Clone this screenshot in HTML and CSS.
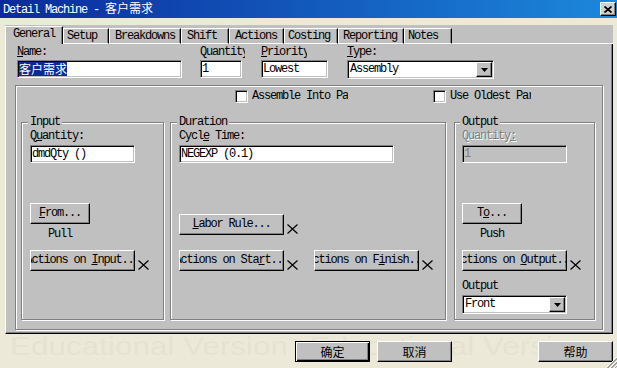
FILE: index.html
```html
<!DOCTYPE html>
<html lang="zh-CN">
<head>
    <meta charset="UTF-8">
    <meta name="viewport" content="width=device-width, initial-scale=1.0">
    <title>Detail Machine - 客户需求</title>
    <link rel="stylesheet" href="styles.css">
</head>
<body>
    <div class="titlebar">
        <span class="title">Detail Machine - <span class="cjk">客户需求</span></span>
        <span class="close-btn">
            <svg width="8" height="7" viewBox="0 0 8 7"><path d="M0.5 0.5 L7.5 6.5 M7.5 0.5 L0.5 6.5" stroke="#000" stroke-width="1.8" fill="none"/></svg>
        </span>
    </div>

    <div class="tabs">
        <div class="tabstrip">
            <div class="tab tab-active tab-general">General</div>
            <div class="tab tab-setup">Setup</div>
            <div class="tab tab-breakdowns">Breakdowns</div>
            <div class="tab tab-shift">Shift</div>
            <div class="tab tab-actions">Actions</div>
            <div class="tab tab-costing">Costing</div>
            <div class="tab tab-reporting">Reporting</div>
            <div class="tab tab-notes">Notes</div>
            <div class="tab-fill"></div>
        </div>

        <div class="page">
            <div class="fields">
                <div class="field field-name">
                    <div class="field-label"><u>N</u>ame:</div>
                    <div class="edit"><span class="cjk selected">客户需求</span></div>
                </div>
                <div class="field field-qty">
                    <div class="field-label label-qty">Quantity</div>
                    <div class="edit">1</div>
                </div>
                <div class="field field-priority">
                    <div class="field-label label-priority"><u>P</u>riority</div>
                    <div class="edit">Lowest</div>
                </div>
                <div class="field field-type">
                    <div class="field-label"><u>T</u>ype:</div>
                    <div class="combo">
                        <span class="combo-text">Assembly</span>
                        <span class="combo-arrow"><svg width="7" height="4" viewBox="0 0 7 4"><path d="M0 0 H7 L3.5 4 Z" fill="#000"/></svg></span>
                    </div>
                </div>
            </div>

            <div class="frame">
                <div class="checks">
                    <div class="check">
                        <span class="check-box"></span>
                        <span class="check-text check-assemble">Assemble Into Parts</span>
                    </div>
                    <div class="check check-oldest">
                        <span class="check-box"></span>
                        <span class="check-text check-oldest-text">Use Oldest Parts</span>
                    </div>
                </div>

                <div class="groups">
                    <!-- Input -->
                    <div class="group group-input">
                        <div class="group-title">Input</div>
                        <div class="group-label">Q<u>u</u>antity:</div>
                        <div class="edit edit-short">dmdQty ()</div>
                        <div class="btn btn-small btn-first"><span><u>F</u>rom...</span></div>
                        <div class="flow-text">Pull</div>
                        <div class="action-row">
                            <div class="btn btn-action"><span>Actions on <u>I</u>nput...</span></div>
                            <svg class="clear-x" width="11" height="10" viewBox="0 0 11 10"><path d="M0.5 0.5 L10.5 9.5 M10.5 0.5 L0.5 9.5" stroke="#000" stroke-width="1.2" fill="none"/></svg>
                        </div>
                    </div>

                    <!-- Duration -->
                    <div class="group group-duration">
                        <div class="group-title">Duration</div>
                        <div class="group-label">Cycl<u>e</u> Time:</div>
                        <div class="edit edit-long">NEGEXP (0.1)</div>
                        <div class="action-row labor-row">
                            <div class="btn btn-action"><span><u>L</u>abor Rule...</span></div>
                            <svg class="clear-x" width="11" height="10" viewBox="0 0 11 10"><path d="M0.5 0.5 L10.5 9.5 M10.5 0.5 L0.5 9.5" stroke="#000" stroke-width="1.2" fill="none"/></svg>
                        </div>
                        <div class="action-row">
                            <div class="btn btn-action"><span>Actions on Sta<u>r</u>t...</span></div>
                            <svg class="clear-x" width="11" height="10" viewBox="0 0 11 10"><path d="M0.5 0.5 L10.5 9.5 M10.5 0.5 L0.5 9.5" stroke="#000" stroke-width="1.2" fill="none"/></svg>
                            <div class="btn btn-action btn-finish"><span>Actions on F<u>i</u>nish...</span></div>
                            <svg class="clear-x" width="11" height="10" viewBox="0 0 11 10"><path d="M0.5 0.5 L10.5 9.5 M10.5 0.5 L0.5 9.5" stroke="#000" stroke-width="1.2" fill="none"/></svg>
                        </div>
                    </div>

                    <!-- Output -->
                    <div class="group group-output">
                        <div class="group-title">Output</div>
                        <div class="group-label label-disabled">Quantity<u>:</u></div>
                        <div class="edit edit-short edit-disabled">1</div>
                        <div class="btn btn-small btn-first"><span>T<u>o</u>...</span></div>
                        <div class="flow-text">Push</div>
                        <div class="action-row">
                            <div class="btn btn-action"><span>Actions on <u>O</u>utput...</span></div>
                            <svg class="clear-x" width="11" height="10" viewBox="0 0 11 10"><path d="M0.5 0.5 L10.5 9.5 M10.5 0.5 L0.5 9.5" stroke="#000" stroke-width="1.2" fill="none"/></svg>
                        </div>
                        <div class="group-label output-label">Output</div>
                        <div class="combo combo-short">
                            <span class="combo-text">Front</span>
                            <span class="combo-arrow"><svg width="7" height="4" viewBox="0 0 7 4"><path d="M0 0 H7 L3.5 4 Z" fill="#000"/></svg></span>
                        </div>
                    </div>
                </div>
            </div>
        </div>
    </div>

    <div class="dialog-buttons">
        <div class="btn btn-dialog btn-default"><span class="cjk">确定</span></div>
        <div class="btn btn-dialog btn-cancel"><span class="cjk">取消</span></div>
        <div class="btn btn-dialog btn-help"><span class="cjk">帮助</span></div>
    </div>

    <div class="watermark"><span>Educational Version</span><span class="watermark-2">Educational Version</span></div>

    <svg class="grip" width="12" height="12" viewBox="0 0 12 12">
        <path d="M12 1 L1 12 M12 5 L5 12 M12 9 L9 12" stroke="#fff" stroke-width="1" fill="none"/>
        <path d="M12 2 L2 12 M12 3 L3 12 M12 6 L6 12 M12 7 L7 12 M12 10 L10 12" stroke="#a0a0a0" stroke-width="1" fill="none"/>
    </svg>
</body>
</html>
```

FILE: styles.css
```css
body {
    margin: 0;
    width: 617px;
    height: 368px;
    overflow: hidden;
    background: #ece9d8;
    font-family: "Liberation Mono", "Noto Sans CJK SC", monospace;
    font-size: 12px;
    letter-spacing: -1.2px;
    line-height: 13px;
    color: #000;
}
.cjk {
    font-family: "Noto Sans CJK SC", sans-serif;
    font-size: 12px;
    letter-spacing: 0;
}
u {
    text-decoration: underline;
    text-underline-offset: 1px;
}

/* title bar */
.titlebar {
    height: 18px;
    display: flex;
    align-items: center;
    justify-content: space-between;
    padding: 0 1px 0 3px;
    background: linear-gradient(to right, #0a2a9c, #1c88dc);
    color: #fff;
}
.close-btn {
    width: 16px;
    height: 14px;
    box-sizing: border-box;
    display: flex;
    align-items: center;
    justify-content: center;
    background: #d4d0c8;
    border: 1px solid;
    border-color: #fff #000 #000 #fff;
    box-shadow: inset -1px -1px #808080;
}

/* tabs */
.tabs {
    margin: 7px 0 0 5px;
    width: 608px;
}
.tabstrip {
    height: 19px;
    display: flex;
    align-items: flex-end;
    background: #c0c0c0;
}
.tab {
    height: 16px;
    box-sizing: border-box;
    border-top: 1px solid #fff;
    border-left: 1px solid #fff;
    border-right: 1px solid #000;
    border-bottom: 1px solid #fff;
    box-shadow: inset -1px 0 #808080;
    line-height: 14px;
    white-space: nowrap;
    overflow: hidden;
}
.tab-active {
    height: 18px;
    border-bottom: none;
}
.tab-general { width: 58px; padding-left: 7px; }
.tab-setup { width: 46px; padding-left: 3px; }
.tab-breakdowns { width: 72px; padding-left: 5px; }
.tab-shift { width: 48px; padding-left: 5px; }
.tab-actions { width: 55px; padding-left: 5px; }
.tab-costing { width: 54px; padding-left: 3px; }
.tab-reporting { width: 66px; padding-left: 4px; }
.tab-notes { width: 48px; padding-left: 3px; }
.tab-fill {
    flex: 1;
    border-bottom: 1px solid #fff;
}
.page {
    height: 290px;
    box-sizing: border-box;
    background: #c0c0c0;
    border-left: 1px solid #fff;
    border-right: 1px solid #000;
    border-bottom: 1px solid #000;
    box-shadow: inset -1px -1px #808080;
    padding-top: 2px;
}

/* top fields */
.fields {
    display: flex;
    height: 33px;
    padding-left: 11px;
}
.field-label {
    height: 14px;
    white-space: nowrap;
    overflow: hidden;
}
.field-name { width: 165px; }
.field-qty { width: 42px; margin-left: 18px; }
.field-priority { width: 67px; margin-left: 19px; }
.field-type { width: 147px; margin-left: 19px; }
.label-qty { width: 45px; }
.label-priority { width: 46px; }

.edit {
    height: 18px;
    box-sizing: border-box;
    background: #fff;
    border: 1px solid;
    border-color: #808080 #fff #fff #808080;
    box-shadow: inset 1px 1px #000, inset -1px -1px #c0c0c0;
    padding: 0 1px;
    line-height: 16px;
    white-space: nowrap;
    overflow: hidden;
}
.selected {
    display: inline-block;
    vertical-align: top;
    margin-top: 1px;
    height: 14px;
    line-height: 14px;
    background: #0a2a94;
    color: #fff;
}
.edit-short { width: 105px; margin-top: 2px; }
.edit-long { width: 215px; margin-top: 2px; }
.edit-disabled {
    background: #c0c0c0;
    color: #808080;
}

.combo {
    height: 19px;
    box-sizing: border-box;
    display: flex;
    align-items: center;
    justify-content: space-between;
    background: #fff;
    border: 1px solid;
    border-color: #808080 #fff #fff #808080;
    box-shadow: inset 1px 1px #000, inset -1px -1px #c0c0c0;
    padding: 1px;
}
.combo-text {
    padding-left: 1px;
}
.combo-arrow {
    width: 16px;
    height: 15px;
    box-sizing: border-box;
    display: flex;
    align-items: center;
    justify-content: center;
    background: #c0c0c0;
    border: 1px solid;
    border-color: #fff #000 #000 #fff;
    box-shadow: inset -1px -1px #808080;
}
.combo-short {
    width: 105px;
    margin-top: 2px;
}

/* big frame */
.frame {
    width: 588px;
    height: 245px;
    box-sizing: border-box;
    margin: 6px 0 0 9px;
    border: 1px solid #808080;
    box-shadow: inset 1px 1px #fff, 1px 1px #fff;
}
.checks {
    display: flex;
    margin-top: 4px;
    padding-left: 219px;
    height: 13px;
}
.check {
    display: flex;
    align-items: center;
}
.check-box {
    width: 13px;
    height: 13px;
    box-sizing: border-box;
    background: #fff;
    border: 1px solid;
    border-color: #808080 #fff #fff #808080;
    box-shadow: inset 1px 1px #000, inset -1px -1px #c0c0c0;
}
.check-text {
    margin-left: 4px;
    white-space: nowrap;
    overflow: hidden;
}
.check-assemble { width: 96px; }
.check-oldest { margin-left: 85px; }
.check-oldest-text { width: 81px; }

.groups {
    display: flex;
    margin-top: 19px;
    padding-left: 5px;
}
.group {
    height: 198px;
    box-sizing: border-box;
    display: flex;
    flex-direction: column;
    align-items: flex-start;
    border: 1px solid #808080;
    box-shadow: inset 1px 1px #fff, 1px 1px #fff;
    padding-left: 8px;
}
.group-input { width: 143px; }
.group-duration { width: 276px; margin-left: 6px; }
.group-output { width: 141px; margin-left: 8px; padding-left: 7px; }
.group-title {
    margin: -7px 0 0 -2px;
    padding: 0 2px;
    height: 13px;
    background: #c0c0c0;
}
.group-label {
    margin-top: 1px;
    height: 13px;
    white-space: nowrap;
}
.label-disabled {
    color: #808080;
    text-shadow: 1px 1px #fff;
}
.output-label {
    margin-top: 9px;
}

/* buttons */
.btn {
    height: 21px;
    box-sizing: border-box;
    display: flex;
    align-items: center;
    justify-content: center;
    background: #c0c0c0;
    border: 1px solid;
    border-color: #fff #000 #000 #fff;
    box-shadow: inset -1px -1px #808080;
    white-space: nowrap;
    overflow: hidden;
}
.btn-small { width: 60px; }
.btn-first { margin-top: 40px; }
.btn-action { width: 105px; }
.btn-finish { margin-left: 16px; }
.flow-text {
    width: 60px;
    margin-top: 4px;
    text-align: center;
    height: 13px;
}
.action-row {
    display: flex;
    align-items: flex-end;
    margin-top: 9px;
}
.labor-row {
    margin-top: 51px;
}
.group-duration .labor-row + .action-row {
    margin-top: 15px;
}
.clear-x {
    margin: 0 0 1px 3px;
}

/* dialog buttons */
.dialog-buttons {
    display: flex;
    justify-content: flex-end;
    margin-top: 7px;
    padding-right: 4px;
}
.btn-dialog { width: 75px; }
.btn-default {
    border: 1px solid #000;
    box-shadow: inset 1px 1px #fff, inset -1px -1px #000, inset -2px -2px #808080;
}
.btn-cancel { margin-left: 7px; }
.btn-help { margin-left: 86px; }

/* watermark behind the dialog buttons */
.watermark {
    position: absolute;
    left: 10px;
    top: 333px;
    z-index: -1;
    font-family: "Liberation Sans", Arial, sans-serif;
    font-size: 26px;
    line-height: 26px;
    letter-spacing: 0;
    color: #e5e2d1;
    white-space: nowrap;
    transform: scaleX(1.21);
    transform-origin: left top;
}
.watermark-2 {
    margin-left: 18px;
}
.grip {
    position: absolute;
    right: 0;
    bottom: 0;
}
```
